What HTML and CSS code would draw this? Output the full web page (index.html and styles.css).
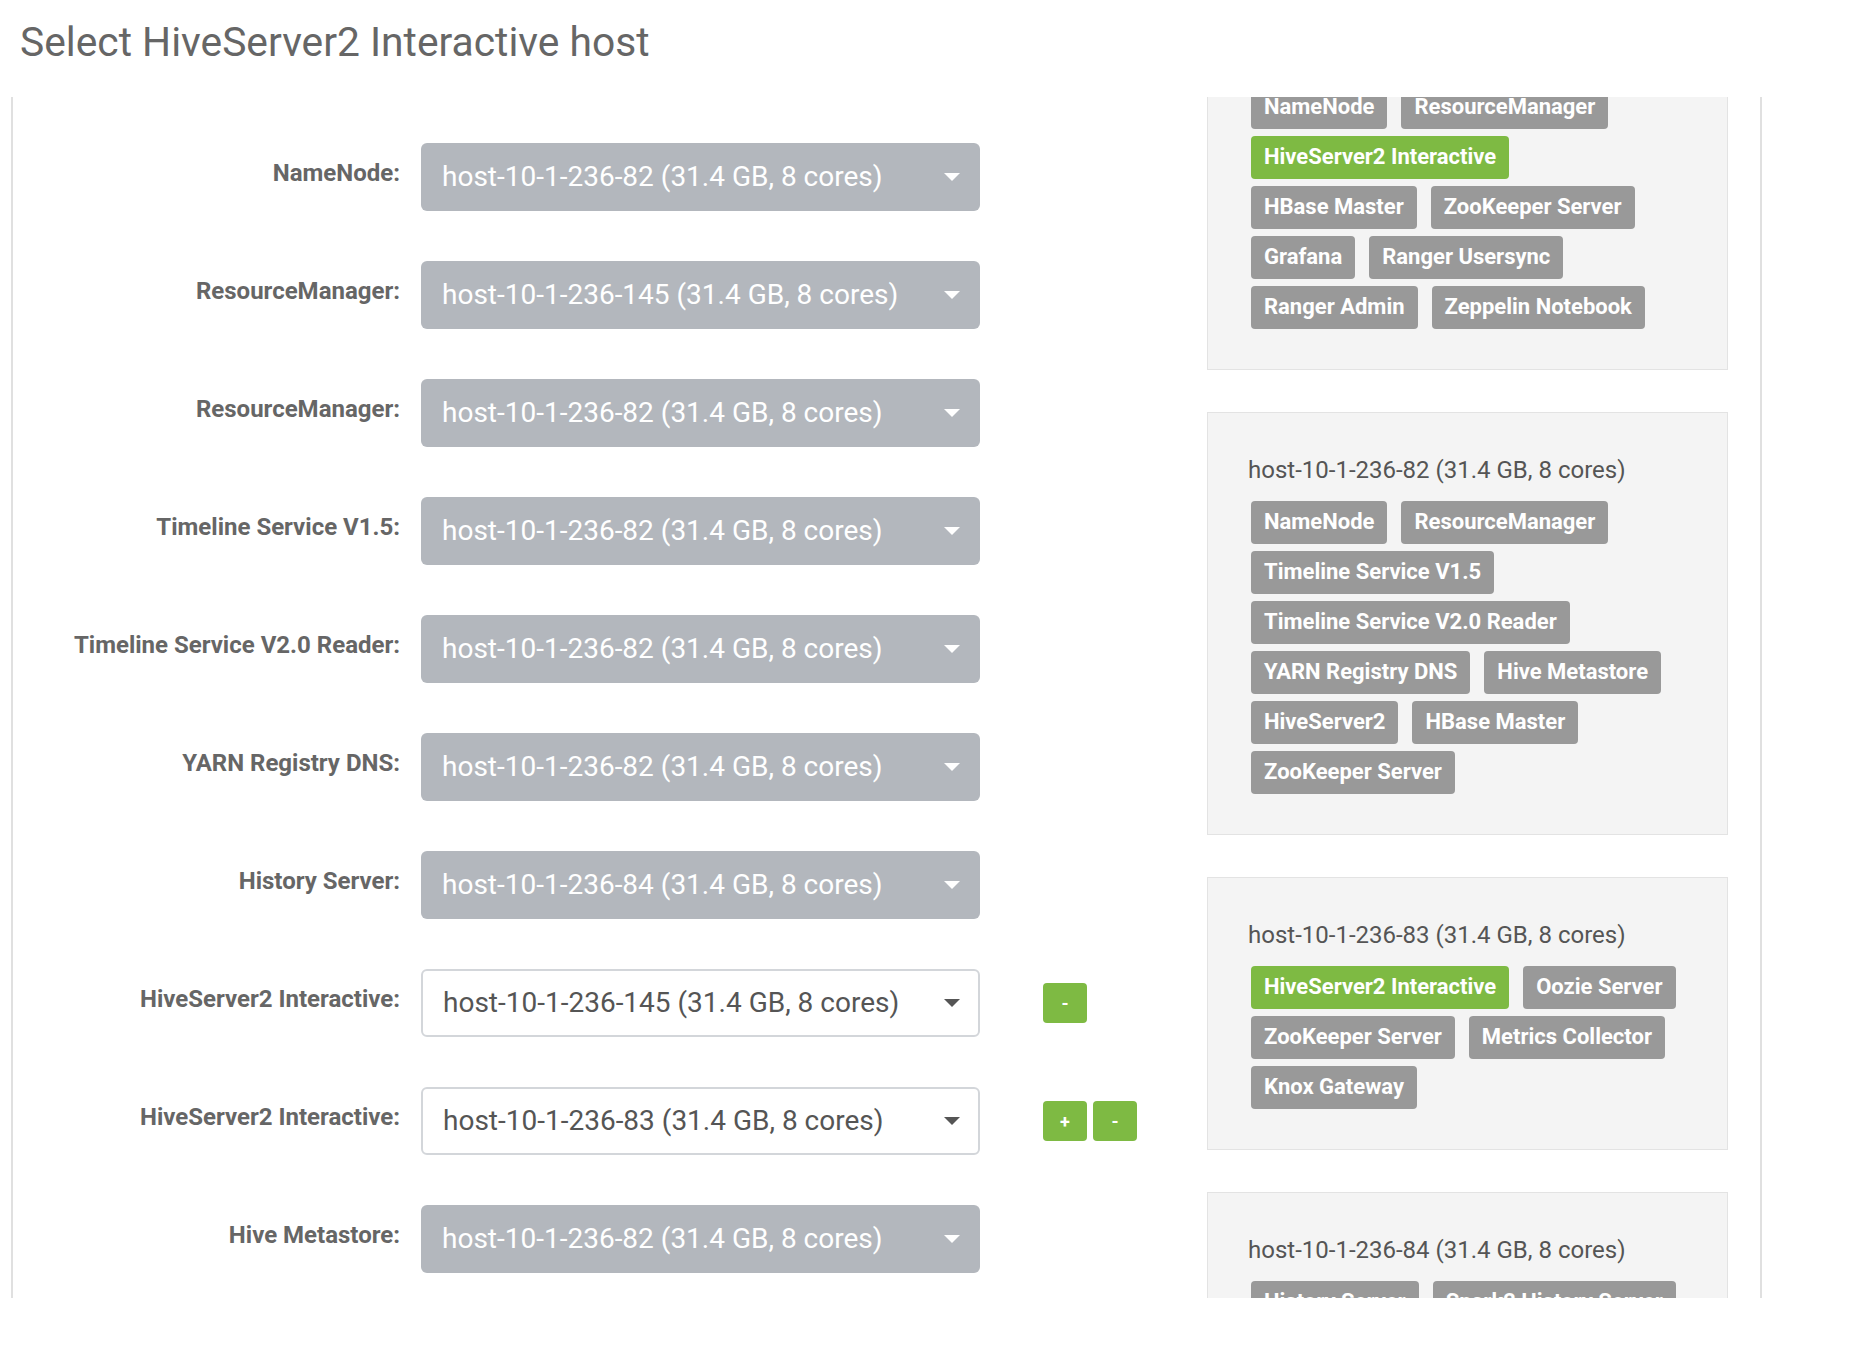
FILE: index.html
```html
<!DOCTYPE html>
<html lang="en">
<head>
<meta charset="utf-8">
<title>Select HiveServer2 Interactive host</title>
<link rel="stylesheet" href="styles.css">
</head>
<body>
<h1 class="page-title">Select HiveServer2 Interactive host</h1>
<div class="assign">
  <div class="form">
    <div class="row">
      <div class="label">NameNode:</div>
      <div class="select disabled"><span class="value">host-10-1-236-82 (31.4 GB, 8 cores)</span><span class="caret"></span></div>
    </div>
    <div class="row">
      <div class="label">ResourceManager:</div>
      <div class="select disabled"><span class="value">host-10-1-236-145 (31.4 GB, 8 cores)</span><span class="caret"></span></div>
    </div>
    <div class="row">
      <div class="label">ResourceManager:</div>
      <div class="select disabled"><span class="value">host-10-1-236-82 (31.4 GB, 8 cores)</span><span class="caret"></span></div>
    </div>
    <div class="row">
      <div class="label">Timeline Service V1.5:</div>
      <div class="select disabled"><span class="value">host-10-1-236-82 (31.4 GB, 8 cores)</span><span class="caret"></span></div>
    </div>
    <div class="row">
      <div class="label">Timeline Service V2.0 Reader:</div>
      <div class="select disabled"><span class="value">host-10-1-236-82 (31.4 GB, 8 cores)</span><span class="caret"></span></div>
    </div>
    <div class="row">
      <div class="label">YARN Registry DNS:</div>
      <div class="select disabled"><span class="value">host-10-1-236-82 (31.4 GB, 8 cores)</span><span class="caret"></span></div>
    </div>
    <div class="row">
      <div class="label">History Server:</div>
      <div class="select disabled"><span class="value">host-10-1-236-84 (31.4 GB, 8 cores)</span><span class="caret"></span></div>
    </div>
    <div class="row">
      <div class="label">HiveServer2 Interactive:</div>
      <div class="select enabled"><span class="value">host-10-1-236-145 (31.4 GB, 8 cores)</span><span class="caret"></span></div>
      <div class="btns"><span class="btn">-</span></div>
    </div>
    <div class="row">
      <div class="label">HiveServer2 Interactive:</div>
      <div class="select enabled"><span class="value">host-10-1-236-83 (31.4 GB, 8 cores)</span><span class="caret"></span></div>
      <div class="btns"><span class="btn">+</span><span class="btn">-</span></div>
    </div>
    <div class="row">
      <div class="label">Hive Metastore:</div>
      <div class="select disabled"><span class="value">host-10-1-236-82 (31.4 GB, 8 cores)</span><span class="caret"></span></div>
    </div>
  </div>

  <div class="hosts">
    <div class="host-box">
      <div class="host-name">host-10-1-236-145 (31.4 GB, 8 cores)</div>
      <div class="tags">
        <div class="tag-row"><span class="tag">NameNode</span><span class="tag">ResourceManager</span></div>
        <div class="tag-row"><span class="tag new">HiveServer2 Interactive</span></div>
        <div class="tag-row"><span class="tag">HBase Master</span><span class="tag">ZooKeeper Server</span></div>
        <div class="tag-row"><span class="tag">Grafana</span><span class="tag">Ranger Usersync</span></div>
        <div class="tag-row"><span class="tag">Ranger Admin</span><span class="tag">Zeppelin Notebook</span></div>
      </div>
    </div>
    <div class="host-box">
      <div class="host-name">host-10-1-236-82 (31.4 GB, 8 cores)</div>
      <div class="tags">
        <div class="tag-row"><span class="tag">NameNode</span><span class="tag">ResourceManager</span></div>
        <div class="tag-row"><span class="tag">Timeline Service V1.5</span></div>
        <div class="tag-row"><span class="tag">Timeline Service V2.0 Reader</span></div>
        <div class="tag-row"><span class="tag">YARN Registry DNS</span><span class="tag">Hive Metastore</span></div>
        <div class="tag-row"><span class="tag">HiveServer2</span><span class="tag">HBase Master</span></div>
        <div class="tag-row"><span class="tag">ZooKeeper Server</span></div>
      </div>
    </div>
    <div class="host-box">
      <div class="host-name">host-10-1-236-83 (31.4 GB, 8 cores)</div>
      <div class="tags">
        <div class="tag-row"><span class="tag new">HiveServer2 Interactive</span><span class="tag">Oozie Server</span></div>
        <div class="tag-row"><span class="tag">ZooKeeper Server</span><span class="tag">Metrics Collector</span></div>
        <div class="tag-row"><span class="tag">Knox Gateway</span></div>
      </div>
    </div>
    <div class="host-box">
      <div class="host-name">host-10-1-236-84 (31.4 GB, 8 cores)</div>
      <div class="tags">
        <div class="tag-row"><span class="tag">History Server</span><span class="tag">Spark2 History Server</span></div>
        <div class="tag-row"><span class="tag">Livy for Spark2 Server</span></div>
      </div>
    </div>
  </div>
</div>
</body>
</html>
```

FILE: styles.css
```css
html, body {
  margin: 0;
  padding: 0;
  background: #ffffff;
}

body {
  font-family: Roboto, "Liberation Sans", Arial, sans-serif;
  color: #555555;
}

.page-title {
  margin: 20px 0 33px 20px;
  font-size: 40.75px;
  line-height: 44px;
  font-weight: 400;
  color: #666666;
}

.assign {
  display: flex;
  margin-left: 11px;
  width: 1751px;
  box-sizing: border-box;
  height: 1201px;
  overflow: hidden;
  border-left: 2px solid #e0e0e0;
  border-right: 2px solid #e0e0e0;
}

/* left column: component -> host selects */
.form {
  flex: 1;
  padding-top: 46px;
}

.row {
  display: flex;
  align-items: flex-start;
  margin-bottom: 50px;
}

.label {
  width: 387px;
  flex: none;
  text-align: right;
  padding-top: 14px;
  font-size: 24px;
  line-height: 33px;
  font-weight: 700;
  color: #666666;
}

.select {
  flex: none;
  display: flex;
  align-items: center;
  justify-content: space-between;
  box-sizing: border-box;
  width: 559px;
  height: 68px;
  margin-left: 21px;
  padding: 0 20px 0 21px;
  border-radius: 6px;
  font-size: 28px;
  line-height: 68px;
  white-space: nowrap;
}

.select.disabled {
  background: #b3b7bd;
  color: #ffffff;
}

.select.enabled {
  background: #ffffff;
  border: 2px solid #d3d6da;
  padding-left: 20px;
  padding-right: 18px;
  color: #555555;
  line-height: 64px;
}

.caret {
  width: 0;
  height: 0;
  border-left: 8px solid transparent;
  border-right: 8px solid transparent;
  border-top: 8px solid #ffffff;
}

.select.enabled .caret {
  border-top-color: #555555;
}

.btns {
  display: flex;
  gap: 6px;
  margin-left: 63px;
  align-self: center;
}

.btn {
  display: flex;
  align-items: center;
  justify-content: center;
  width: 44px;
  height: 40px;
  border-radius: 4px;
  background: #7eba43;
  color: #ffffff;
  font-size: 18px;
  font-weight: 700;
}

/* right column: hosts with assigned components */
.hosts {
  flex: none;
  width: 521px;
  margin-right: 32px;
  margin-top: -100px;
}

.host-box {
  box-sizing: border-box;
  background: #f4f4f4;
  border: 1px solid #e3e3e3;
  padding: 40px 43px;
  margin-bottom: 42px;
}

.host-name {
  font-size: 24px;
  line-height: 34px;
  color: #555555;
  margin: 0 0 14px -3px;
  white-space: nowrap;
}

.tags {
  display: flex;
  flex-direction: column;
  gap: 7px;
}

.tag-row {
  display: flex;
  gap: 14px;
}

.tag {
  height: 43px;
  padding: 0 13px;
  border-radius: 4px;
  background: #999999;
  color: #ffffff;
  font-size: 22px;
  line-height: 42px;
  font-weight: 700;
  white-space: nowrap;
}

.tag.new {
  background: #7eba43;
}
```
